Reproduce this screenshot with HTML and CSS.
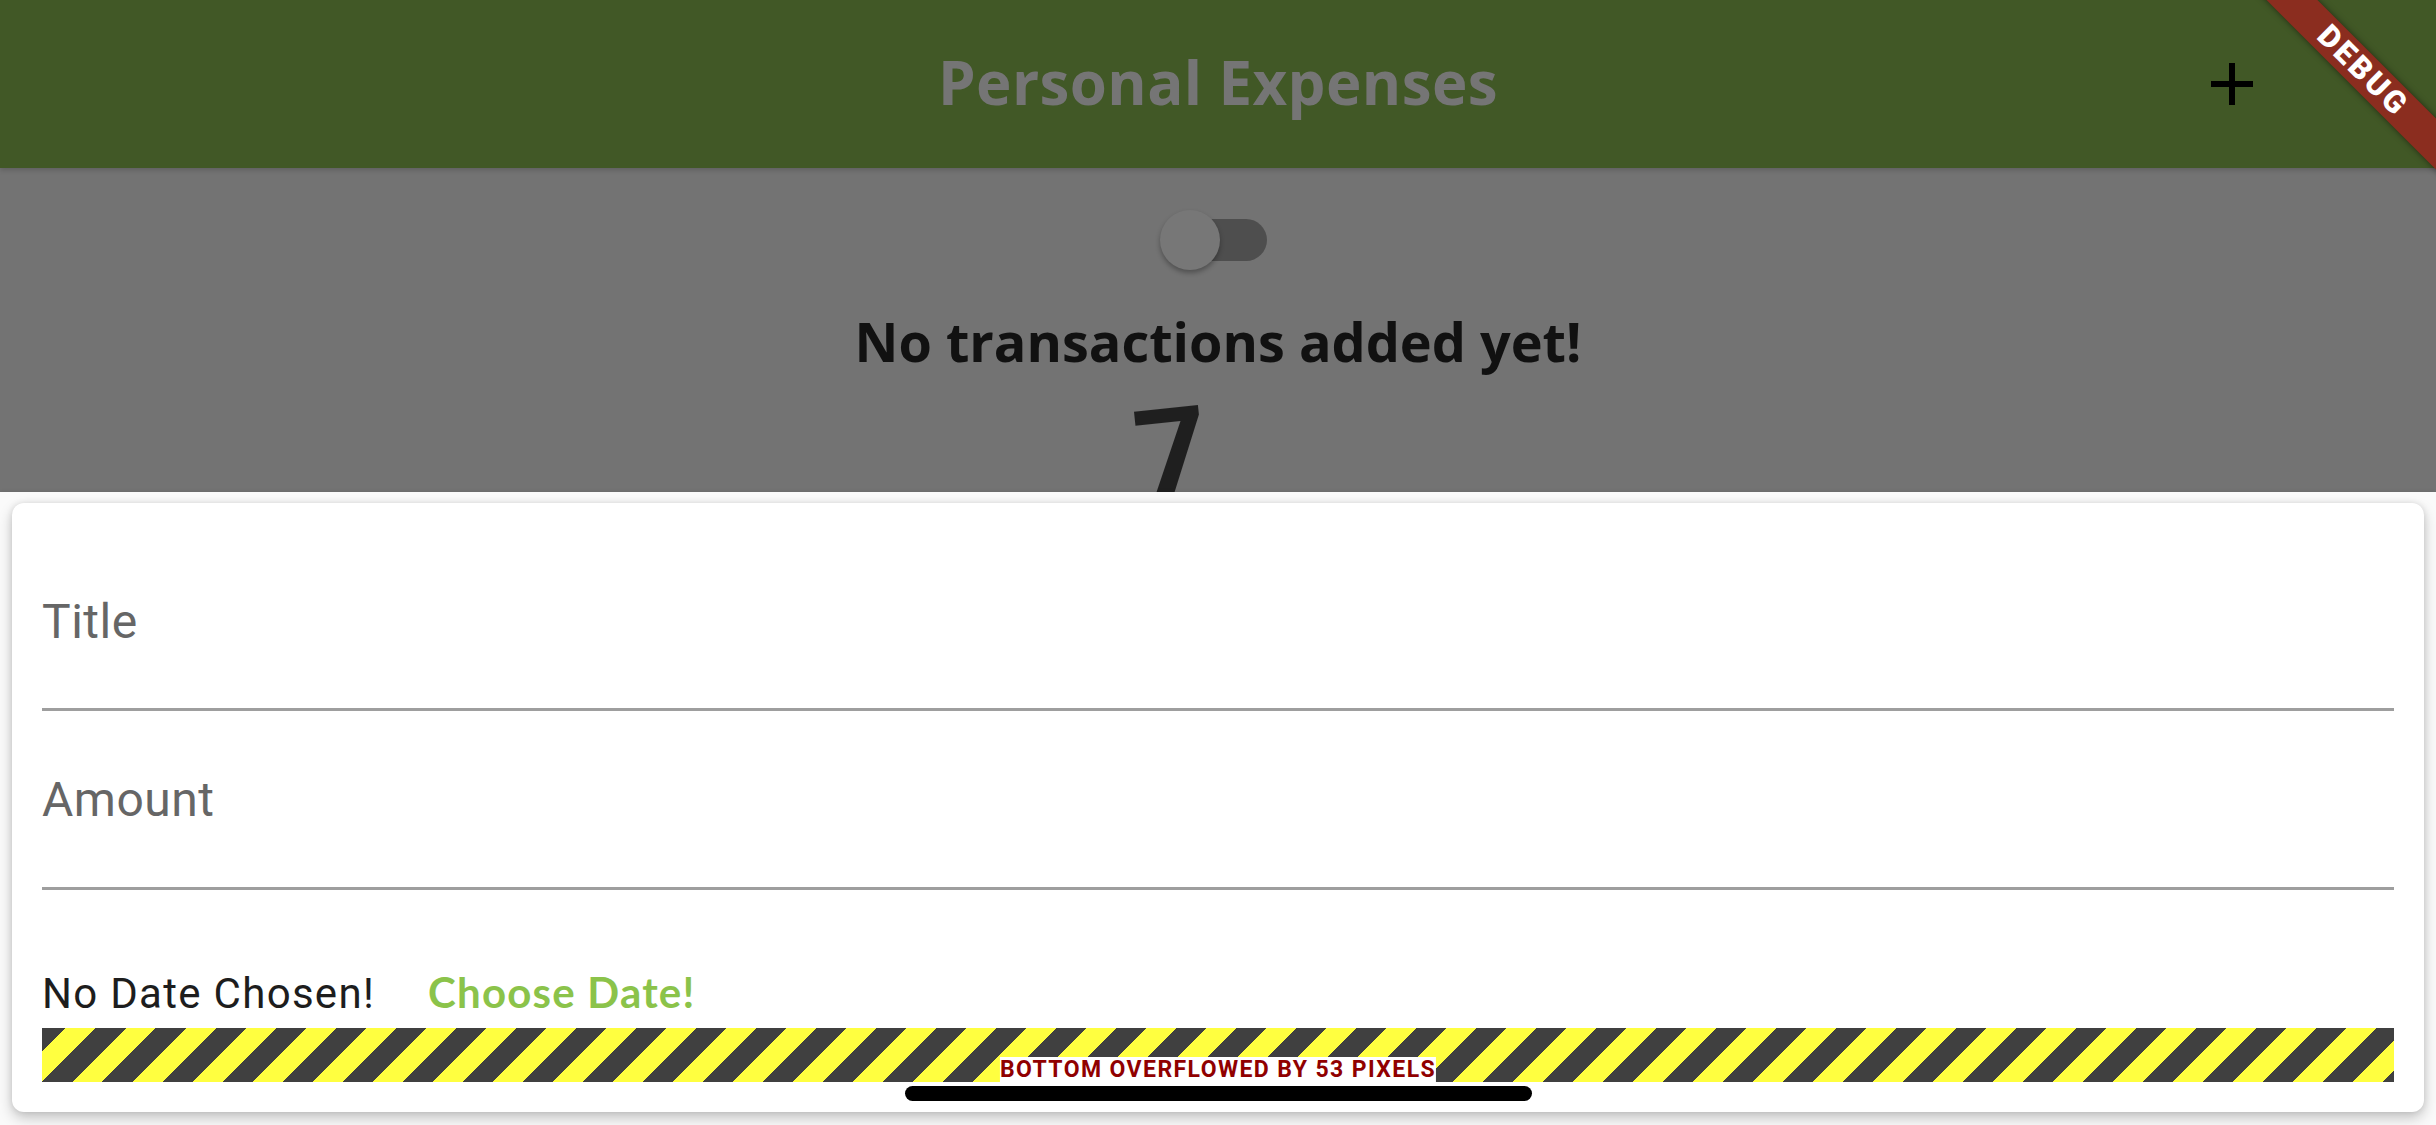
FILE: index.html
```html
<!DOCTYPE html>
<html lang="en">
<head>
<meta charset="utf-8">
<title>Personal Expenses</title>
<link rel="stylesheet" href="styles.css">
</head>
<body>
<div class="screen">
  <header class="appbar">
    <h1 class="appbar-title">Personal Expenses</h1>
    <div class="appbar-actions">
      <svg class="icon-btn" viewBox="0 0 24 24" aria-label="Add">
        <path d="M19 13h-6v6h-2v-6H5v-2h6V5h2v6h6v2z" fill="#000"/>
      </svg>
    </div>
  </header>

  <main class="body">
    <div class="switch">
      <div class="switch-track"></div>
      <div class="switch-thumb"></div>
    </div>
    <h2 class="empty-title">No transactions added yet!</h2>
    <div class="waiting">7</div>
  </main>

  <section class="sheet">
    <div class="card">
      <div class="field"><span class="field-label">Title</span></div>
      <div class="field"><span class="field-label">Amount</span></div>
      <div class="date-row">
        <span class="date-text">No Date Chosen!</span>
        <span class="date-btn">Choose Date!</span>
      </div>
      <div class="overflow">
        <span class="overflow-label">BOTTOM OVERFLOWED BY 53 PIXELS</span>
      </div>
    </div>
  </section>

  <div class="home-indicator"></div>
  <div class="debug-banner">DEBUG</div>
</div>
</body>
</html>
```

FILE: styles.css
```css
html, body {
  margin: 0;
  padding: 0;
}

body {
  width: 2436px;
  height: 1125px;
  overflow: hidden;
  font-family: Roboto, "Liberation Sans", sans-serif;
}

.screen {
  position: relative;
  width: 2436px;
  height: 1125px;
  overflow: hidden;
  display: flex;
  flex-direction: column;
  background: #737373;
}

/* App bar */
.appbar {
  flex: none;
  height: 168px;
  background: #415826;
  display: grid;
  grid-template-columns: 1fr auto 1fr;
  align-items: center;
  position: relative;
  z-index: 1;
  box-shadow: 0 2px 5px rgba(0, 0, 0, 0.18);
}

.appbar-title {
  grid-column: 2;
  margin: 0;
  padding-bottom: 2px;
  font: 700 60px/1.362 "Open Sans", sans-serif;
  letter-spacing: 0.4px;
  color: #757575;
  white-space: nowrap;
}

.appbar-actions {
  grid-column: 3;
  justify-self: end;
  display: flex;
  padding-right: 168px;
}

.icon-btn {
  display: block;
  width: 72px;
  height: 72px;
}

/* Body */
.body {
  flex: none;
  height: 324px;
  overflow: hidden;
  display: flex;
  flex-direction: column;
  align-items: center;
}

.switch {
  flex: none;
  position: relative;
  margin-top: 42px;
  width: 116px;
  height: 60px;
  display: flex;
  align-items: center;
}

.switch-track {
  margin-left: 8px;
  width: 99px;
  height: 42px;
  border-radius: 21px;
  background: #4e4e4e;
}

.switch-thumb {
  position: absolute;
  left: 0;
  top: 0;
  width: 60px;
  height: 60px;
  border-radius: 50%;
  background: #777777;
  box-shadow: 0 3px 5px rgba(0, 0, 0, 0.3);
}

.empty-title {
  flex: none;
  margin: 35px 0 0;
  font: 700 54px/73.5px "Open Sans", sans-serif;
  color: #111111;
  white-space: nowrap;
}

.waiting {
  flex: none;
  margin-top: 11px;
  font: 700 128px/130px Roboto, sans-serif;
  color: #1f1f1f;
  transform: translateX(-46px) rotate(-6deg);
}

/* Bottom sheet */
.sheet {
  flex: 1;
  background: #fafafa;
  padding: 11px 12px 0;
  box-shadow: 0 -1px 3px rgba(0, 0, 0, 0.08);
  position: relative;
  z-index: 2;
}

.card {
  background: #ffffff;
  border-radius: 12px;
  padding: 30px;
  box-shadow: 0 6px 14px rgba(0, 0, 0, 0.22), 0 0 6px rgba(0, 0, 0, 0.1);
}

.field {
  padding: 61px 0 58px;
  border-bottom: 3px solid #9e9e9e;
  font: 400 48px/56.25px Roboto, sans-serif;
  letter-spacing: 0.5px;
  color: #666666;
}

.date-row {
  margin-top: 78px;
  display: flex;
  align-items: baseline;
  line-height: 49px;
}

.date-text {
  font: 400 42px/49px Roboto, sans-serif;
  letter-spacing: 1.3px;
  color: #1d1d1d;
}

.date-btn {
  margin-left: 53px;
  font: 700 42px/49px Lato, sans-serif;
  letter-spacing: 1.2px;
  color: #8bc34a;
}

.overflow {
  position: relative;
  margin-top: 10px;
  height: 54px;
  background: repeating-linear-gradient(135deg,
    #404040 0, #404040 16.97px,
    #ffff40 16.97px, #ffff40 38.18px,
    #404040 38.18px, #404040 42.43px);
}

.overflow-label {
  position: absolute;
  left: 50%;
  bottom: -1px;
  transform: translateX(-50%);
  background: #ffffff;
  color: #900000;
  font: 700 23px/26px Roboto, sans-serif;
  letter-spacing: 1.4px;
  white-space: nowrap;
}

/* Overlays */
.home-indicator {
  position: absolute;
  left: 905px;
  top: 1086px;
  width: 627px;
  height: 15px;
  border-radius: 8px;
  background: #000000;
  z-index: 5;
}

.debug-banner {
  position: absolute;
  left: 2213px;
  top: 53px;
  width: 300px;
  height: 36px;
  transform: rotate(45deg);
  background: #8b2d1f;
  box-shadow: 0 0 6px rgba(0, 0, 0, 0.5);
  color: #ffffff;
  font: 900 31px/36px Roboto, sans-serif;
  letter-spacing: 3px;
  text-align: center;
  z-index: 6;
}
```
